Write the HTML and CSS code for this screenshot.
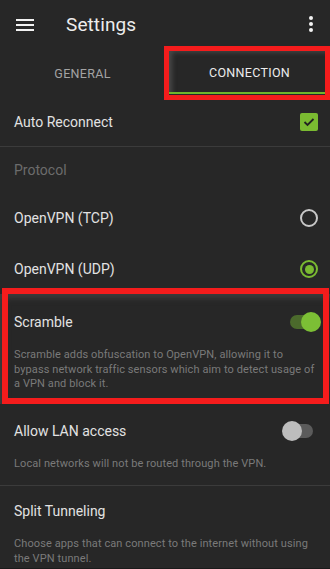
FILE: index.html
```html
<!DOCTYPE html>
<html>
<head>
<meta charset="utf-8">
<link rel="stylesheet" href="styles.css">
</head>
<body>
<div class="screen">
  <header class="appbar">
    <svg class="menu" width="18" height="14" viewBox="0 0 18 14"><rect x="0" y="1" width="18" height="2" fill="#f2f2f2"/><rect x="0" y="6" width="18" height="2" fill="#f2f2f2"/><rect x="0" y="11" width="18" height="2" fill="#f2f2f2"/></svg>
    <h1 class="title">Settings</h1>
    <svg class="kebab" width="4" height="16" viewBox="0 0 4 16"><circle cx="2" cy="2" r="2" fill="#f2f2f2"/><circle cx="2" cy="8" r="2" fill="#f2f2f2"/><circle cx="2" cy="14" r="2" fill="#f2f2f2"/></svg>
  </header>
  <nav class="tabs">
    <div class="tab">GENERAL</div>
    <div class="tab active">CONNECTION</div>
  </nav>
  <section class="row bordered">
    <span class="label">Auto Reconnect</span>
    <span class="checkbox"><svg width="12" height="10" viewBox="0 0 12 10"><path d="M1.5 5 L4.5 8 L10.5 2" fill="none" stroke="#222" stroke-width="1.8"/></svg></span>
  </section>
  <div class="category">Protocol</div>
  <section class="row radio-row">
    <span class="label">OpenVPN (TCP)</span>
    <span class="radio"></span>
  </section>
  <section class="row radio-row tall">
    <span class="label">OpenVPN (UDP)</span>
    <span class="radio on"></span>
  </section>
  <section class="pref scramble">
    <div class="pref-head">
      <span class="label">Scramble</span>
      <span class="switch on"></span>
    </div>
    <p class="desc">Scramble adds obfuscation to OpenVPN, allowing it to bypass network traffic sensors which aim to detect usage of a VPN and block it.</p>
  </section>
  <section class="pref lan bordered">
    <div class="pref-head">
      <span class="label">Allow LAN access</span>
      <span class="switch"></span>
    </div>
    <p class="desc">Local networks will not be routed through the VPN.</p>
  </section>
  <section class="pref split">
    <div class="pref-head">
      <span class="label">Split Tunneling</span>
    </div>
    <p class="desc">Choose apps that can connect to the internet without using the VPN tunnel.</p>
  </section>
</div>
</body>
</html>
```

FILE: styles.css
```css
* { box-sizing: border-box; }
html, body {
  margin: 0;
  padding: 0;
  background: #272727;
}
body {
  width: 330px;
  height: 569px;
  overflow: hidden;
  font-family: Roboto, "Noto Sans", sans-serif;
}
.screen {
  width: 330px;
  height: 569px;
  background: #272727;
  border-bottom: 1px solid #1a1a1a;
}
.appbar {
  height: 48px;
  display: flex;
  align-items: center;
  padding: 0 17px 0 16px;
}
.menu { display: block; margin-top: 1px; }
.title {
  margin: 1px 0 0 32px;
  flex: 1;
  font-size: 19px;
  font-weight: 400;
  color: #ededed;
  letter-spacing: 0.1px;
}
.kebab { display: block; }
.tabs {
  height: 49px;
  display: grid;
  grid-template-columns: 1fr 1fr;
}
.tab {
  position: relative;
  display: flex;
  align-items: center;
  justify-content: center;
  font-size: 12.5px;
  color: #a3a3a3;
  letter-spacing: 0.3px;
  padding-top: 1px;
}
.tab.active {
  color: #ececec;
  box-shadow: inset 0 -2px 0 #6fb52c, inset 5px 4px 5px -2px #4a4a4a;
  margin-left: 4px;
  margin-bottom: 3px;
  margin-top: 2px;
  padding-top: 0;
}
.tab.active::after {
  content: "";
  position: absolute;
  left: -5px;
  top: -4px;
  right: 0;
  bottom: -6px;
  border: 5px solid #f41c1c;
}
.row {
  display: flex;
  align-items: center;
  justify-content: space-between;
  padding: 0 12px 0 14px;
  height: 50px;
}
.row.tall { height: 51px; padding-top: 1px; }
.bordered { border-bottom: 1px solid #3b3b3b; }
.label {
  font-size: 14px;
  color: #e2e2e2;
  line-height: 20px;
}
.checkbox {
  width: 18px;
  height: 18px;
  border-radius: 2px;
  background: #7aba31;
  display: flex;
  align-items: center;
  justify-content: center;
}
.checkbox svg { display: block; }
.category {
  height: 46px;
  padding: 0 14px;
  display: flex;
  align-items: center;
  font-size: 14px;
  color: #6c6c6c;
}
.radio {
  width: 18px;
  height: 18px;
  border-radius: 50%;
  border: 2px solid #c8c8c8;
  position: relative;
}
.radio.on { border-color: #7aba31; }
.radio.on::after {
  content: "";
  position: absolute;
  left: 2.5px;
  top: 2.5px;
  width: 9px;
  height: 9px;
  border-radius: 50%;
  background: #7aba31;
}
.pref {
  padding: 17px 14px 14px 14px;
}
.pref-head {
  display: flex;
  align-items: center;
  justify-content: space-between;
  height: 20px;
}
.desc {
  margin: 16px -2px 0 0;
  font-size: 11px;
  line-height: 14.5px;
  color: #7a7a7a;
  letter-spacing: 0.1px;
}
.scramble {
  position: relative;
  padding-top: 18px;
  padding-bottom: 12px;
  box-shadow: inset 6px 6px 6px -2px #3d3d3d;
}
.scramble::after {
  content: "";
  position: absolute;
  left: 2px;
  top: -6px;
  right: 1px;
  bottom: 0;
  border: 6px solid #f41c1c;
}
.lan { padding-bottom: 14px; }
.split { padding-top: 15px; }
.split .desc { margin-top: 16px; }
.switch {
  position: relative;
  width: 28px;
  height: 14px;
  border-radius: 7px;
  background: #5b5b5b;
  margin-right: 3px;
}
.switch::after {
  content: "";
  position: absolute;
  left: -3px;
  top: -3px;
  width: 20px;
  height: 20px;
  border-radius: 50%;
  background: #bdbdbd;
}
.switch.on {
  background: #4b6a2c;
  margin-right: -2px;
}
.switch.on::after {
  left: auto;
  right: -3px;
  background: #7cbf35;
}
```
